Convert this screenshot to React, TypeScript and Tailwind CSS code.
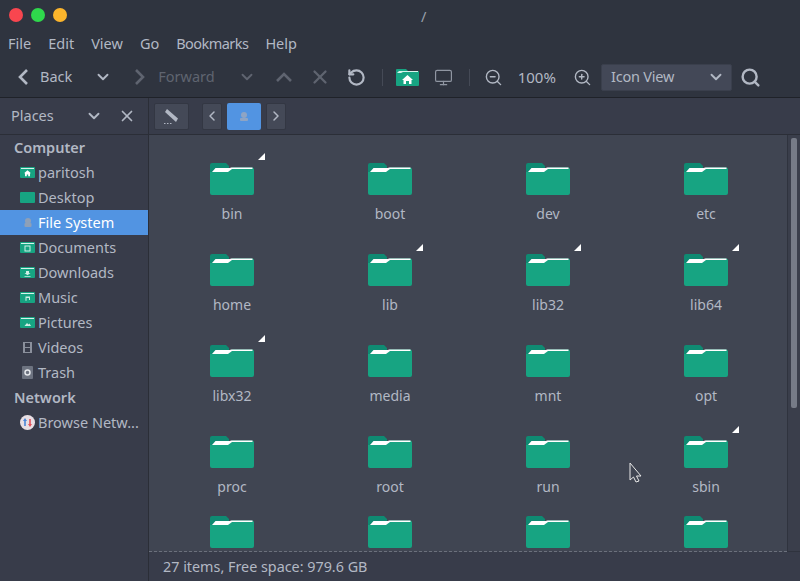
import { ChevronDown, ChevronLeft, ChevronRight, Monitor, RotateCcw, Search, X, ZoomIn, ZoomOut } from "lucide-react";

const menus = ["File", "Edit", "View", "Go", "Bookmarks", "Help"];

const FolderBig = () => (
  <svg width="44" height="32" viewBox="0 0 44 32" className="block">
    <path d="M2 0H16L19 3V9H0V2a2 2 0 0 1 2-2z" fill="#0f8a72" />
    <path d="M0 9H18L22 4.500H42a2 2 0 0 1 2 2V30a2 2 0 0 1-2 2H2a2 2 0 0 1-2-2z" fill="#17a482" />
    <path d="M2 9L5.500 5H20L21 4.500H42.500V6H22L18 9z" fill="#fff" />
  </svg>
);

const SmallFolder = ({ children }: { children?: React.ReactNode }) => (
  <svg width="15" height="11" viewBox="0 0 15 11" className="shrink-0">
    <rect width="15" height="11" rx="1" fill="#17a482" />
    <rect x="1" y="1" width="13" height="1" fill="#d8f3ec" />
    {children}
  </svg>
);

const Home = () => <path d="M7.500 3.200L11 6.200H10V9.200H8.200V7.400H6.800V9.200H5V6.200H4z" fill="#fff" />;

// big toolbar chevrons, lucide's are too narrow at this height
const NavChevron = ({ dir, color }: { dir: "left" | "right"; color: string }) => (
  <svg width="12" height="18" viewBox="0 0 12 18" className="shrink-0">
    <path d={dir === "left" ? "M10 2L3 9l7 7" : "M2 2l7 7-7 7"} fill="none" stroke={color} strokeWidth="2.600" />
  </svg>
);

const places = [
  { name: "paritosh", icon: <SmallFolder><Home /></SmallFolder> },
  { name: "Desktop", icon: <svg width="15" height="11" viewBox="0 0 15 11" className="shrink-0"><rect width="15" height="11" rx="1" fill="#17a482" /></svg> },
  { name: "File System", active: true, icon: <svg width="15" height="13" viewBox="0 0 15 13" className="shrink-0"><circle cx="8" cy="5" r="3" fill="#8ea0b8" /><rect x="4.500" y="7" width="7" height="4" rx="1" fill="#8ea0b8" /></svg> },
  { name: "Documents", icon: <SmallFolder><rect x="5" y="4" width="5" height="5" fill="none" stroke="#cfeee6" /></SmallFolder> },
  { name: "Downloads", icon: <SmallFolder><path d="M6 4h3v2h1.500L7.500 8.300 4.500 6H6zM4.500 9h6v.8h-6z" fill="#cfeee6" /></SmallFolder> },
  { name: "Music", icon: <SmallFolder><path d="M5.500 4.500h4.500v3.500H9V6H6.500v2.800H5.500z" fill="#cfeee6" /></SmallFolder> },
  { name: "Pictures", icon: <SmallFolder><path d="M4.500 9L7 6l1.500 1.500L9.500 6.500 11 9z" fill="#cfeee6" /></SmallFolder> },
  { name: "Videos", icon: <svg width="15" height="13" viewBox="0 0 15 13" className="shrink-0"><path d="M3 1h9v11H3zM5 2v4h5V2zM5 7v4h5V7z" fill="#8b909c" fillRule="evenodd" /></svg> },
  { name: "Trash", icon: <svg width="15" height="13" viewBox="0 0 15 13" className="shrink-0"><rect x="2" y="0" width="11" height="13" rx="1" fill="#6d7380" /><circle cx="7.500" cy="6.500" r="2.500" fill="none" stroke="#e4e6ea" strokeWidth="1.500" /></svg> },
];

const rows = [
  [["bin", 1], ["boot", 0], ["dev", 0], ["etc", 0]],
  [["home", 0], ["lib", 1], ["lib32", 1], ["lib64", 1]],
  [["libx32", 1], ["media", 0], ["mnt", 0], ["opt", 0]],
  [["proc", 0], ["root", 0], ["run", 0], ["sbin", 1]],
  [["", 0], ["", 0], ["", 0], ["", 0]],
] as [string, number][][];

export default function App() {
  return (
    <div className="flex h-[581px] w-[800px] flex-col overflow-hidden bg-[#2f343f] text-[14.5px] text-[#b2b8c4] [font-family:'Noto_Sans',sans-serif]">
      <div className="flex h-[31px] shrink-0 items-center px-[9px] pb-px">
        <div className="flex gap-2">
          <span className="h-[14px] w-[14px] rounded-full bg-[#f8464f]" />
          <span className="h-[14px] w-[14px] rounded-full bg-[#2fd84c]" />
          <span className="h-[14px] w-[14px] rounded-full bg-[#fcb52c]" />
        </div>
        <span className="ml-[354px] pt-1 text-[#9aa0ac]">/</span>
      </div>

      <div className="flex h-[28px] shrink-0 items-center gap-[17px] px-2 pb-[2px]">
        {menus.map((m) => <span key={m} className={m === "Bookmarks" ? "tracking-[-0.55px]" : ""}>{m}</span>)}
      </div>

      <div className="flex h-[39px] shrink-0 items-center border-b border-[#1f2229] pb-[2px] pl-[17px]">
        <NavChevron dir="left" color="#b2b8c4" />
        <span className="ml-[11px]">Back</span>
        <ChevronDown size={18} strokeWidth={2.5} className="ml-[22px]" />
        <span className="ml-[22px] flex"><NavChevron dir="right" color="#5f6470" /></span>
        <span className="ml-[12px] text-[#5f6470]">Forward</span>
        <ChevronDown size={18} strokeWidth={2.5} className="ml-[23px] text-[#5f6470]" />
        <svg width="18" height="12" viewBox="0 0 18 12" className="ml-[19px] shrink-0">
          <path d="M2 10l7-7 7 7" fill="none" stroke="#5f6470" strokeWidth="2.600" />
        </svg>
        <X size={22} strokeWidth={2.5} className="ml-[16px] text-[#5f6470]" />
        <RotateCcw size={19} strokeWidth={2.75} className="ml-[16px]" />
        <span className="ml-[16px] h-[17px] w-px bg-[#454a56]" />
        <span className="ml-[13px]">
          <svg width="23" height="17" viewBox="0 0 23 17" className="block">
            <path d="M1 0h9l2 2h10a1 1 0 0 1 1 1v13a1 1 0 0 1-1 1H1a1 1 0 0 1-1-1V1a1 1 0 0 1 1-1z" fill="#17a482" />
            <path d="M1 4L3 2h19v1H7L5 4z" fill="#d8f3ec" />
            <path d="M11.500 6L17 11h-1.500v4H13v-3h-3v3H7.500v-4H6z" fill="#fff" />
          </svg>
        </span>
        <Monitor size={19} strokeWidth={1.5} className="ml-[15px] text-[#9096a2]" />
        <span className="ml-[16px] h-[17px] w-px bg-[#454a56]" />
        <ZoomOut size={19} strokeWidth={1.75} className="ml-[14px]" />
        <span className="ml-[15px] text-[15px]">100%</span>
        <ZoomIn size={19} strokeWidth={1.75} className="ml-[17px]" />
        <div className="ml-[9px] flex h-[27px] w-[131px] items-center justify-between rounded-[2px] border border-[#3a3f4c] bg-[#434857] pl-[9px] pr-[6px]">
          <span className="tracking-[-0.2px]">Icon View</span>
          <ChevronDown size={18} strokeWidth={2.5} />
        </div>
        <Search size={21} strokeWidth={2.75} className="ml-[8px]" />
      </div>

      <div className="flex min-h-0 flex-1">
        <aside className="flex w-[149px] shrink-0 flex-col border-r border-[#2b2e37] bg-[#383c4a]">
          <div className="flex h-[37px] shrink-0 items-center border-b border-[#2b2e37] pl-[11px]">
            <span>Places</span>
            <ChevronDown size={18} strokeWidth={2.5} className="ml-[31px]" />
            <X size={18} strokeWidth={2.25} className="ml-[15px]" />
          </div>
          <div>
            <div className="flex h-[25px] items-center pl-[14px] font-semibold">Computer</div>
            {places.map((p) => (
              <div key={p.name} className={`flex h-[25px] items-center pl-[20px] ${p.active ? "bg-[#5294e2] text-white" : ""}`}>
                <span className="flex w-[18px] shrink-0 items-center">{p.icon}</span>
                {p.name}
              </div>
            ))}
            <div className="flex h-[25px] items-center pl-[14px] font-semibold">Network</div>
            <div className="flex h-[25px] items-center pl-[20px]">
              <svg width="15" height="15" viewBox="0 0 15 15" className="mr-[3px] shrink-0">
                <circle cx="7.500" cy="7.500" r="7.500" fill="#e8dfe4" />
                <path d="M5 3l2 3H5.800v5H4.200V6H3z" fill="#4a86d8" />
                <path d="M10 12l-2-3h1.200V4h1.600v5H12z" fill="#e2515a" />
              </svg>
              Browse Netw...
            </div>
          </div>
        </aside>

        <div className="flex min-w-0 flex-1 flex-col">
          <div className="flex h-[37px] shrink-0 items-center gap-[13px] border-b border-[#2b2e37] bg-[#383c4a] pl-[5px]">
            <div className="flex h-[27px] w-[35px] items-center justify-center rounded-[2px] border border-[#333743] bg-[#444957]">
              <svg width="17" height="17" viewBox="0 0 17 17">
                <path d="M4 1l11 9.500-2 3.500L2 4z" fill="#b2b8c4" />
                <path d="M1 15.500h1.500M4 15.500h1.500M7 15.500h1.500" stroke="#b2b8c4" />
              </svg>
            </div>
            <div className="flex items-center gap-[5px]">
              <div className="flex h-[27px] w-[20px] items-center justify-center rounded-[2px] border border-[#333743] bg-[#444957]">
                <ChevronLeft size={16} strokeWidth={2.25} />
              </div>
              <div className="flex h-[27px] w-[34px] items-center justify-center rounded-[2px] bg-[#5294e2]">
                <svg width="10" height="11" viewBox="0 0 10 11">
                  <circle cx="5" cy="4" r="3" fill="#8ea4c4" />
                  <rect x="1" y="7" width="8" height="3" rx="1" fill="#8ea4c4" />
                </svg>
              </div>
              <div className="flex h-[27px] w-[20px] items-center justify-center rounded-[2px] border border-[#333743] bg-[#444957]">
                <ChevronRight size={16} strokeWidth={2.25} />
              </div>
            </div>
          </div>

          <div className="flex min-h-0 flex-1">
            <div className="relative min-w-0 flex-1 overflow-hidden border-b border-dashed border-[#6b707c] bg-[#404552]">
              <div className="flex flex-col pl-[4px] pt-[28px] text-[14px]">
                {rows.map((row, i) => (
                  <div key={i} className={`grid shrink-0 grid-cols-[repeat(4,158px)] ${i === 3 ? "h-[80px]" : "h-[91px]"}`}>
                    {row.map(([name, link], j) => (
                      <div key={j} className="flex flex-col items-center">
                        <div className="relative">
                          <FolderBig />
                          {link === 1 && <span className="absolute -right-[11px] -top-[10px] h-0 w-0 border-b-[7px] border-l-[7px] border-b-white border-l-transparent" />}
                        </div>
                        <span className="mt-[9px] leading-[20px]">{name}</span>
                      </div>
                    ))}
                  </div>
                ))}
              </div>
              <svg width="14" height="22" viewBox="0 0 14 22" className="absolute left-[480px] top-[327px]">
                <path d="M1 1v17l3.500-3 2.500 5 3-1-2.500-5H12z" fill="#404552" stroke="#e8e8e8" strokeWidth="1" />
              </svg>
            </div>
            <div className="w-[13px] shrink-0 border-b border-l border-[#2f333e] bg-[#3a3e4b] pl-[3px] pt-[3px]">
              <div className="h-[270px] w-[6px] rounded-[2px] bg-[#767b87]" />
            </div>
          </div>

          <div className="flex h-[29px] shrink-0 items-center bg-[#383c4a] pl-[14px] text-[14.35px]">27 items, Free space: 979.6 GB</div>
        </div>
      </div>
    </div>
  );
}
